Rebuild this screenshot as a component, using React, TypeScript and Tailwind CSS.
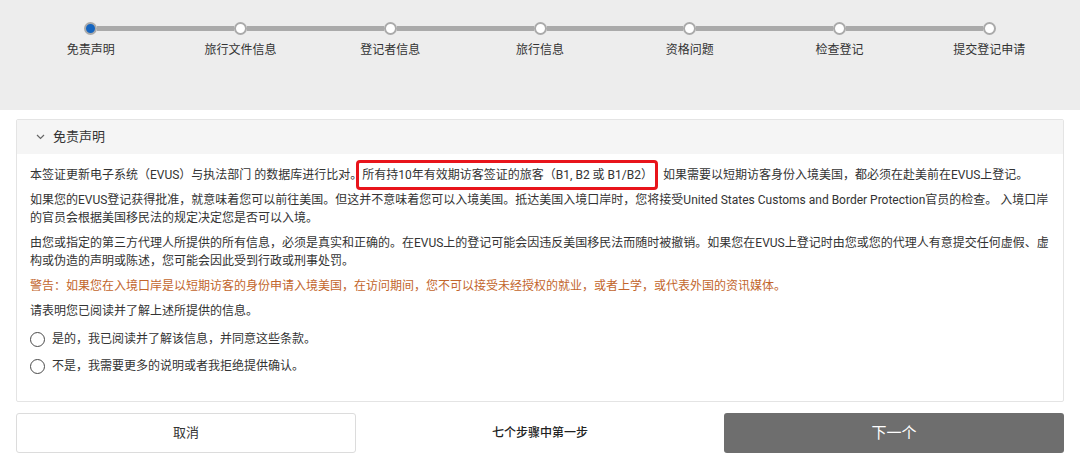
import React from "react";

const steps = ["免责声明", "旅行文件信息", "登记者信息", "旅行信息", "资格问题", "检查登记", "提交登记申请"];

function Radio({ label }: { label: string }) {
  return (
    <div className="flex items-center h-[18px]">
      <span className="w-[15px] h-[15px] rounded-full border-[1.5px] border-[#4a4a4a] bg-white" />
      <span className="ml-[7px] text-[12px] leading-[18px] text-[#333]">{label}</span>
    </div>
  );
}

export default function App() {
  const font = { fontFamily: 'Roboto, "Noto Sans CJK SC", "Noto Sans", sans-serif' };
  return (
    <div className="w-[1080px] h-[476px] bg-white overflow-hidden" style={font}>
      <div className="h-[110px] bg-[#ededed]">
        <div className="mx-4 grid grid-cols-7 pt-[22px]">
          {steps.map((s, i) => (
            <div key={s} className="flex flex-col items-center">
              <div className="flex items-center w-full h-[13px]">
                <div className={`flex-1 h-[5px] ${i === 0 ? "bg-transparent" : "bg-[#aaaaaa]"}`} />
                <div
                  className={`w-[13px] h-[13px] rounded-full border-2 border-[#aaaaaa] ${
                    i === 0 ? "bg-[#1565c0]" : "bg-white"
                  }`}
                />
                <div className={`flex-1 h-[5px] ${i === steps.length - 1 ? "bg-transparent" : "bg-[#aaaaaa]"}`} />
              </div>
              <div className="mt-[7px] text-[12px] leading-[16px] text-[#333]">{s}</div>
            </div>
          ))}
        </div>
      </div>

      <div className="mx-4 mt-[9px] border border-[#e4e4e4] rounded-[2px]">
        <div className="h-[34px] bg-[#f5f5f5] flex items-center pl-[19px] text-[13px] text-[#333]">
          <svg width="9" height="6" viewBox="0 0 9 6" className="mr-[8px]">
            <polyline points="1,1 4.5,4.5 8,1" fill="none" stroke="#666" strokeWidth="1.2" />
          </svg>
          免责声明
        </div>
        <div className="pl-[13px] pr-[4px] pt-[12px] pb-[26px] text-[12px] leading-[18px] text-[#333]">
          <p className="mb-[7px]">
            本签证更新电子系统（EVUS）与执法部门 的数据库进行比对。
            <span className="border-[3px] border-[#e8141b] rounded-[4px] py-[5px] pl-[3px] pr-[2px] -ml-[6px]">
              所有持10年有效期访客签证的旅客（B1, B2 或 B1/B2）
            </span>
            <span className="ml-[5px]">如果需要以短期访客身份入境美国，都必须在赴美前在EVUS上登记。</span>
          </p>
          <p className="mb-[7px]">
            如果您的EVUS登记获得批准，就意味着您可以前往美国。但这并不意味着您可以入境美国。抵达美国入境口岸时，您将接受United States Customs and Border Protection官员的检查。 入境口岸的官员会根据美国移民法的规定决定您是否可以入境。
          </p>
          <p className="mb-[7px]">
            由您或指定的第三方代理人所提供的所有信息，必须是真实和正确的。在EVUS上的登记可能会因违反美国移民法而随时被撤销。如果您在EVUS上登记时由您或您的代理人有意提交任何虚假、虚构或伪造的声明或陈述，您可能会因此受到行政或刑事处罚。
          </p>
          <p className="mb-[7px] text-[#c2652c]">
            警告：如果您在入境口岸是以短期访客的身份申请入境美国，在访问期间，您不可以接受未经授权的就业，或者上学，或代表外国的资讯媒体。
          </p>
          <p>请表明您已阅读并了解上述所提供的信息。</p>
          <div className="mt-[10px] flex flex-col gap-[9px]">
            <Radio label="是的，我已阅读并了解该信息，并同意这些条款。" />
            <Radio label="不是，我需要更多的说明或者我拒绝提供确认。" />
          </div>
        </div>
      </div>

      <div className="mx-4 mt-[11px] grid grid-cols-[340px_1fr_340px] h-[40px]">
        <button className="border border-[#dcdcdc] rounded-[3px] bg-white text-[13px] text-[#333]">取消</button>
        <div className="flex items-center justify-center text-[12px] font-medium text-[#222]">七个步骤中第一步</div>
        <button className="rounded-[3px] bg-[#6e6e6e] text-white text-[15px]">下一个</button>
      </div>
    </div>
  );
}
